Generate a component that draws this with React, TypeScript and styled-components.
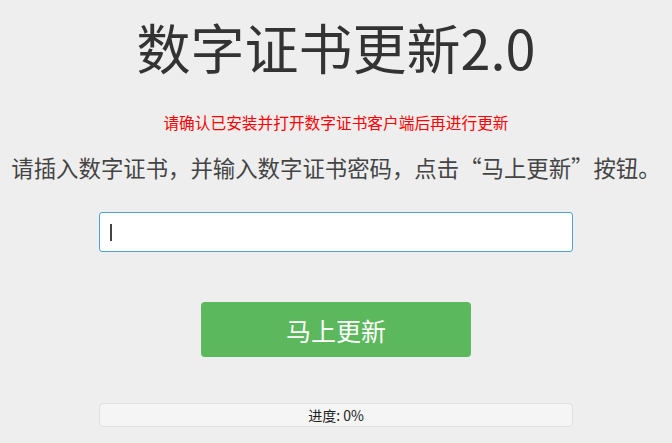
import styled, { createGlobalStyle } from 'styled-components'

const GlobalStyle = createGlobalStyle`
  html, body {
    margin: 0;
    padding: 0;
    background: #eeeeee;
  }
  body {
    font-family: "Noto Sans CJK SC", "Noto Sans", sans-serif;
  }
`

const Page = styled.div`
  display: flex;
  flex-direction: column;
  align-items: center;
  min-height: 443px;
  padding-top: 17px;
  box-sizing: border-box;
`

const Title = styled.h1`
  margin: 0;
  font-size: 54px;
  line-height: 60px;
  font-weight: 400;
  color: #333333;
`

const Warning = styled.p`
  margin: 36px 0 0;
  font-size: 15.7px;
  line-height: 20px;
  color: #ff0000;
`

const Hint = styled.p`
  margin: 19px 0 0;
  font-size: 22.4px;
  line-height: 30px;
  color: #444444;
  white-space: nowrap;
`

const InputWrap = styled.div`
  position: relative;
  margin-top: 30px;
`

const PasswordInput = styled.input`
  display: block;
  width: 474px;
  height: 40px;
  box-sizing: border-box;
  padding: 0 11px;
  border: 1px solid #4aa3df;
  border-radius: 3px;
  background: #ffffff;
  font-size: 18px;
  color: #333;
  outline: none;
  caret-color: transparent;
`

const Caret = styled.span`
  position: absolute;
  left: 11px;
  top: 12px;
  width: 2px;
  height: 17px;
  background: #444444;
  pointer-events: none;
`

const UpdateButton = styled.button`
  margin-top: 50px;
  width: 270px;
  height: 55px;
  border: none;
  border-radius: 4px;
  background: #5cb85c;
  color: #ffffff;
  font-family: inherit;
  font-size: 25px;
  cursor: pointer;
`

const Progress = styled.div`
  margin-top: 46px;
  width: 474px;
  height: 24px;
  box-sizing: border-box;
  border: 1px solid #e0e0e0;
  border-radius: 4px;
  background: #f5f5f5;
  display: flex;
  align-items: center;
  justify-content: center;
  font-size: 14px;
  color: #222222;
`

export default function App() {
  return (
    <>
      <GlobalStyle />
      <Page>
        <Title>数字证书更新2.0</Title>
        <Warning>请确认已安装并打开数字证书客户端后再进行更新</Warning>
        <Hint>请插入数字证书，并输入数字证书密码，点击“马上更新”按钮。</Hint>
        <InputWrap>
          <PasswordInput type="password" />
          <Caret />
        </InputWrap>
        <UpdateButton>马上更新</UpdateButton>
        <Progress>进度: 0%</Progress>
      </Page>
    </>
  )
}
